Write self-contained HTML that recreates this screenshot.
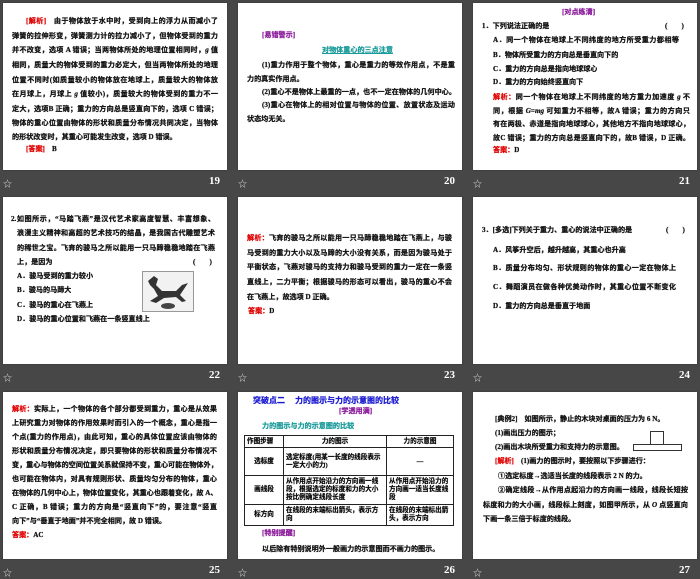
<!DOCTYPE html>
<html><head><meta charset="utf-8"><style>
body{margin:0;width:700px;height:578px;background:#474747;position:relative;overflow:hidden;font-family:"Liberation Serif","Noto Sans CJK SC",sans-serif}
.s{position:absolute;background:#fff;width:224px;height:167px;box-shadow:0 0 1px #222}
.l{position:absolute;white-space:nowrap;font-size:7.1px;font-weight:bold;line-height:10px;color:#111;overflow:hidden;-webkit-text-stroke:0.25px currentColor}
.j{text-align:justify;text-align-last:justify}
.r{color:#e00000}.p{color:#8a1a9a}.t{color:#1a9a9a}.b{color:#1a1ad0}
.n{position:absolute;color:#fff;font-weight:bold;font-size:11px;font-family:"Liberation Serif",serif}
.st{position:absolute;color:#ddd;font-size:9px}
table{position:absolute;border-collapse:collapse;font-size:6.6px;font-weight:bold;line-height:8px;font-family:"Liberation Serif","Noto Sans CJK SC",sans-serif;-webkit-text-stroke:0.2px #111}
td{border:1px solid #222;padding:0 2px;vertical-align:middle}
</style></head><body>
<div class="s" style="left:3px;top:3px"></div>
<div class="s" style="left:238px;top:3px"></div>
<div class="s" style="left:473px;top:3px"></div>
<div class="s" style="left:3px;top:197px"></div>
<div class="s" style="left:238px;top:197px"></div>
<div class="s" style="left:473px;top:197px"></div>
<div class="s" style="left:3px;top:392px"></div>
<div class="s" style="left:238px;top:392px"></div>
<div class="s" style="left:473px;top:392px"></div>

<div class="st" style="left:3px;top:177px">☆</div><div class="n" style="left:209px;top:175px">19</div>
<div class="st" style="left:238px;top:177px">☆</div><div class="n" style="left:444px;top:175px">20</div>
<div class="st" style="left:473px;top:177px">☆</div><div class="n" style="left:679px;top:175px">21</div>
<div class="st" style="left:3px;top:371px">☆</div><div class="n" style="left:209px;top:369px">22</div>
<div class="st" style="left:238px;top:371px">☆</div><div class="n" style="left:444px;top:369px">23</div>
<div class="st" style="left:473px;top:371px">☆</div><div class="n" style="left:679px;top:369px">24</div>
<div class="st" style="left:3px;top:566px">☆</div><div class="n" style="left:209px;top:564px">25</div>
<div class="st" style="left:238px;top:566px">☆</div><div class="n" style="left:444px;top:564px">26</div>
<div class="st" style="left:473px;top:566px">☆</div><div class="n" style="left:679px;top:564px">27</div>

<!-- 19 -->
<div class="l j" style="left:26px;top:16px;width:192px"><span class="r">[解析]</span>　由于物体放于水中时，受到向上的浮力从而减小了</div>
<div class="l j" style="left:12px;top:31px;width:206px">弹簧的拉伸形变，弹簧测力计的拉力减小了，但物体受到的重力</div>
<div class="l j" style="left:12px;top:45px;width:206px">并不改变，选项 A 错误；当两物体所处的地理位置相同时，<i>g</i> 值</div>
<div class="l j" style="left:12px;top:60px;width:206px">相同，质量大的物体受到的重力必定大，但当两物体所处的地理</div>
<div class="l j" style="left:12px;top:75px;width:206px">位置不同时(如质量较小的物体放在地球上，质量较大的物体放</div>
<div class="l j" style="left:12px;top:89px;width:206px">在月球上，月球上 <i>g</i> 值较小)，质量较大的物体受到的重力不一</div>
<div class="l j" style="left:12px;top:104px;width:206px">定大，选项B 正确；重力的方向总是竖直向下的，选项 C 错误；</div>
<div class="l j" style="left:12px;top:118px;width:206px">物体的重心位置由物体的形状和质量分布情况共同决定，当物体</div>
<div class="l" style="left:12px;top:132px">的形状改变时，其重心可能发生改变，选项 D 错误。</div>
<div class="l" style="left:26px;top:144px"><span class="r">[答案]</span>　B</div>

<!-- 20 -->
<div class="l p" style="left:262px;top:30px">[易错警示]</div>
<div class="l t" style="left:322px;top:45px;text-decoration:underline">对物体重心的三点注意</div>
<div class="l j" style="left:262px;top:60px;width:193px">(1)重力作用于整个物体，重心是重力的等效作用点，不是重</div>
<div class="l" style="left:247px;top:74px">力的真实作用点。</div>
<div class="l j" style="left:262px;top:87px;width:194px">(2)重心不是物体上最重的一点，也不一定在物体的几何中心。</div>
<div class="l j" style="left:262px;top:100px;width:193px">(3)重心在物体上的相对位置与物体的位置、放置状态及运动</div>
<div class="l" style="left:247px;top:114px">状态均无关。</div>

<!-- 21 -->
<div class="l p" style="left:562px;top:7px">[对点练清]</div>
<div class="l" style="left:482px;top:21px">1．下列说法正确的是</div><div class="l" style="left:665px;top:21px">(　　)</div>
<div class="l j" style="left:493px;top:35px;width:186px">A．同一个物体在地球上不同纬度的地方所受重力都相等</div>
<div class="l" style="left:493px;top:50px">B．物体所受重力的方向总是垂直向下的</div>
<div class="l" style="left:493px;top:64px">C．重力的方向总是指向地球球心</div>
<div class="l" style="left:493px;top:77px">D．重力的方向始终竖直向下</div>
<div class="l j" style="left:493px;top:92px;width:197px"><span class="r">解析：</span>同一个物体在地球上不同纬度的地方重力加速度 <i>g</i> 不</div>
<div class="l j" style="left:493px;top:106px;width:197px">同，根据 <i>G</i>=<i>mg</i> 可知重力不相等，故A 错误；重力的方向只</div>
<div class="l j" style="left:493px;top:119px;width:197px">有在两极、赤道是指向地球球心，其他地方不指向地球球心，</div>
<div class="l j" style="left:493px;top:133px;width:197px">故C 错误；重力的方向总是竖直向下的，故B 错误，D 正确。</div>
<div class="l" style="left:493px;top:145px"><span class="r">答案：</span>D</div>

<!-- 22 -->
<div class="l j" style="left:11px;top:214px;width:204px">2.如图所示，“马踏飞燕”是汉代艺术家高度智慧、丰富想象、</div>
<div class="l j" style="left:17px;top:228px;width:198px">浪漫主义精神和高超的艺术技巧的结晶，是我国古代雕塑艺术</div>
<div class="l j" style="left:17px;top:243px;width:198px">的稀世之宝。飞奔的骏马之所以能用一只马蹄稳稳地踏在飞燕</div>
<div class="l" style="left:17px;top:257px">上，是因为</div><div class="l" style="left:193px;top:257px">(　　)</div>
<div class="l" style="left:17px;top:271px">A．骏马受到的重力较小</div>
<div class="l" style="left:17px;top:285px">B．骏马的马蹄大</div>
<div class="l" style="left:17px;top:300px">C．骏马的重心在飞燕上</div>
<div class="l" style="left:17px;top:314px">D．骏马的重心位置和飞燕在一条竖直线上</div>
<svg style="position:absolute;left:142px;top:271px" width="52" height="41"><rect x=".5" y=".5" width="51" height="40" fill="#f2f2f2" stroke="#999"/><path d="M6 10 L12 5 L16 8 L14 14 L20 20 L34 20 L40 14 L46 12 L42 18 L38 24 L44 30 L40 31 L34 26 L22 27 L14 32 L8 30 L16 25 L12 18 L8 14 Z" fill="#333"/><ellipse cx="26" cy="35" rx="7" ry="3" fill="#444"/></svg>

<!-- 23 -->
<div class="l j" style="left:247px;top:233px;width:205px"><span class="r">解析：</span>飞奔的骏马之所以能用一只马蹄稳稳地踏在飞燕上，与骏</div>
<div class="l j" style="left:247px;top:248px;width:205px">马受到的重力大小以及马蹄的大小没有关系，而是因为骏马处于</div>
<div class="l j" style="left:247px;top:262px;width:205px">平衡状态，飞燕对骏马的支持力和骏马受到的重力一定在一条竖</div>
<div class="l j" style="left:247px;top:277px;width:205px">直线上，二力平衡；根据骏马的形态可以看出，骏马的重心不会</div>
<div class="l" style="left:247px;top:292px">在飞燕上，故选项 D 正确。</div>
<div class="l" style="left:248px;top:306px"><span class="r">答案：</span>D</div>

<!-- 24 -->
<div class="l" style="left:482px;top:225px">3．[多选]下列关于重力、重心的说法中正确的是</div><div class="l" style="left:666px;top:225px">(　　)</div>
<div class="l" style="left:493px;top:245px">A．风筝升空后，越升越高，其重心也升高</div>
<div class="l j" style="left:493px;top:263px;width:183px">B．质量分布均匀、形状规则的物体的重心一定在物体上</div>
<div class="l j" style="left:493px;top:282px;width:183px">C．舞蹈演员在做各种优美动作时，其重心位置不断变化</div>
<div class="l" style="left:493px;top:301px">D．重力的方向总是垂直于地面</div>

<!-- 25 -->
<div class="l j" style="left:12px;top:404px;width:205px"><span class="r">解析：</span>实际上，一个物体的各个部分都受到重力，重心是从效果</div>
<div class="l j" style="left:12px;top:418px;width:205px">上研究重力对物体的作用效果时而引入的一个概念，重心是指一</div>
<div class="l j" style="left:12px;top:432px;width:205px">个点(重力的作用点)，由此可知，重心的具体位置应该由物体的</div>
<div class="l j" style="left:12px;top:446px;width:205px">形状和质量分布情况决定，即只要物体的形状和质量分布情况不</div>
<div class="l j" style="left:12px;top:460px;width:205px">变，重心与物体的空间位置关系就保持不变，重心可能在物体外，</div>
<div class="l j" style="left:12px;top:474px;width:205px">也可能在物体内，对具有规则形状、质量均匀分布的物体，重心</div>
<div class="l j" style="left:12px;top:488px;width:205px">在物体的几何中心上，物体位置变化，其重心也跟着变化，故 A、</div>
<div class="l j" style="left:12px;top:502px;width:205px">C 正确，B 错误；重力的方向是“竖直向下”的，要注意“竖直</div>
<div class="l" style="left:12px;top:516px">向下”与“垂直于地面”并不完全相同，故 D 错误。</div>
<div class="l" style="left:12px;top:530px"><span class="r">答案：</span>AC</div>

<!-- 26 -->
<div class="l b" style="left:253px;top:396px;font-size:8px">突破点二　 力的图示与力的示意图的比较</div>
<div class="l p" style="left:339px;top:406px">[学透用满]</div>
<div class="l t" style="left:262px;top:421px">力的图示与力的示意图的比较</div>
<table style="left:244px;top:435px;width:210px;height:90px">
<tr style="height:12px"><td style="width:34px">作图步骤</td><td style="text-align:center">力的图示</td><td style="width:62px;text-align:center">力的示意图</td></tr>
<tr style="height:28px"><td style="text-align:center">选标度</td><td>选定标度(用某一长度的线段表示一定大小的力)</td><td style="text-align:center">—</td></tr>
<tr style="height:29px"><td style="text-align:center">画线段</td><td>从作用点开始沿力的方向画一线段，根据选定的标度和力的大小按比例确定线段长度</td><td>从作用点开始沿力的方向画一适当长度线段</td></tr>
<tr style="height:21px"><td style="text-align:center">标方向</td><td>在线段的末端标出箭头，表示方向</td><td>在线段的末端标出箭头，表示方向</td></tr>
</table>
<div class="l p" style="left:262px;top:528px">[特别提醒]</div>
<div class="l" style="left:262px;top:544px">以后除有特别说明外一般画力的示意图而不画力的图示。</div>

<!-- 27 -->
<div class="l" style="left:495px;top:414px">[典例2]　如图所示，静止的木块对桌面的压力为 6 N。</div>
<div class="l" style="left:495px;top:428px">(1)画出压力的图示；</div>
<div class="l" style="left:495px;top:442px">(2)画出木块所受重力和支持力的示意图。</div>
<div style="position:absolute;left:650px;top:431px;width:12px;height:12px;border:1px solid #333"></div>
<div style="position:absolute;left:633px;top:444px;width:47px;height:5px;border:1px solid #333"></div>
<div class="l" style="left:495px;top:456px"><span class="r">[解析]</span>　(1)画力的图示时，要按照以下步骤进行：</div>
<div class="l" style="left:498px;top:471px">①选定标度→选适当长度的线段表示 2 N 的力。</div>
<div class="l j" style="left:498px;top:485px;width:190px">②确定线段→从作用点起沿力的方向画一线段，线段长短按</div>
<div class="l j" style="left:483px;top:500px;width:205px">标度和力的大小画，线段标上刻度，如图甲所示，从 <i>O</i> 点竖直向</div>
<div class="l" style="left:483px;top:514px">下画一条三倍于标度的线段。</div>
</body></html>
